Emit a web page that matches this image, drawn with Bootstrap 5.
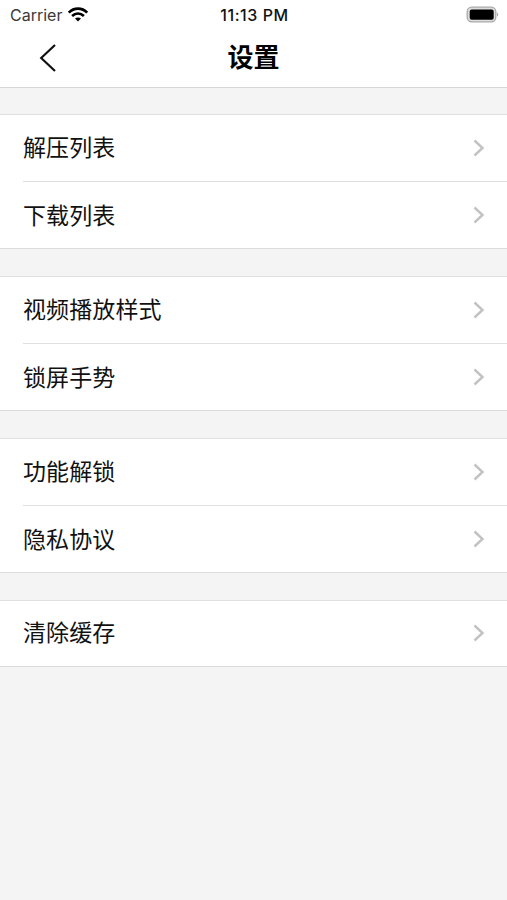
<!DOCTYPE html>
<html lang="zh-CN">
<head>
<meta charset="utf-8">
<meta name="viewport" content="width=device-width, initial-scale=1">
<title>设置</title>
<link href="https://cdn.jsdelivr.net/npm/bootstrap@5.3.0/dist/css/bootstrap.min.css" rel="stylesheet">
<style>
  body { background: #f4f4f4; color: #111; font-family: Inter, "Noto Sans CJK SC", sans-serif; }
  .top-area { height: 88px; border-bottom: 1px solid #d6d6d6; }
  .status { height: 30px; padding: 0 8px 0 10px; font-size: 16px; line-height: 30px; }
  .status > * { flex: 1 1 0; }
  .carrier { color: #3a3a3a; letter-spacing: 0; }
  .wifi { margin-left: 5px; }
  .clock { font-weight: 500; letter-spacing: .55px; }
  .title-bar { height: 55px; padding: 0 38px; }
  .title-bar h1 { font-size: 26px; font-weight: 700; line-height: 54px; color: #000; }
  .side { width: 20px; }
  .group-list { border-top: 1px solid #dfdfdf; border-bottom: 1px solid #dcdcdc; }
  .set-row { height: 66px; margin-left: 23px; padding-right: 22px; font-size: 23px; line-height: 66px; letter-spacing: .1px; color: #111; }
  .set-row + .set-row { border-top: 1px solid #dfdfdf; height: 67px; padding-top: 1px; }
  .set-row + .set-row svg { margin-bottom: 1px; }
  .group-list:last-child .set-row { height: 65px; line-height: 67px; }
  .group-list:last-child svg { margin-bottom: 1px; }
  .sections { padding-top: 26px; gap: 27px; }
</style>
</head>
<body>
<header class="top-area bg-white">
  <div class="status d-flex align-items-center">
    <div class="d-flex align-items-center">
      <span class="carrier">Carrier</span>
      <svg class="wifi" width="22" height="16" viewBox="0 0 22 16" fill="none" stroke="#000" stroke-width="2.700"><path d="M1.800 5.600C7 .4 15 .4 20.200 5.600"/><path d="M5.100 9c3.500-3.200 8.300-3.200 11.800 0"/><path d="M11 14.500l-3-2.900c1.700-1.500 4.300-1.500 6 0z" fill="#000" stroke="none"/></svg>
    </div>
    <span class="clock text-center">11:13 PM</span>
    <div class="d-flex justify-content-end">
      <svg width="34" height="18" viewBox="0 0 34 18"><rect x="2.200" y="1.200" width="28.600" height="14.600" rx="4.500" fill="#ddd" stroke="#a9a9a9" stroke-width="1.300"/><rect x="4.700" y="3.500" width="24" height="10.200" rx="2" fill="#000"/><path d="M32 6.500v4c1.600-.6 1.600-3.400 0-4z" fill="#aaa"/></svg>
    </div>
  </div>
  <nav class="title-bar d-flex justify-content-between align-items-center">
    <a href="#" class="side d-flex" aria-label="返回"><svg width="20" height="30" viewBox="0 0 20 30" fill="none" stroke="#111" stroke-width="2.200"><path d="M17 2 3.200 15 17 28"/></svg></a>
    <h1 class="m-0">设置</h1>
    <span class="side"></span>
  </nav>
</header>
<main class="sections d-flex flex-column">
  <section class="group-list bg-white">
    <div class="set-row d-flex justify-content-between align-items-center"><span>解压列表</span><svg width="12" height="18" viewBox="0 0 12 18" fill="none" stroke="#c2c2c2" stroke-width="2.400"><path d="M1.500 1.500 9.500 9l-8 7.500"/></svg></div>
    <div class="set-row d-flex justify-content-between align-items-center"><span>下载列表</span><svg width="12" height="18" viewBox="0 0 12 18" fill="none" stroke="#c2c2c2" stroke-width="2.400"><path d="M1.500 1.500 9.500 9l-8 7.500"/></svg></div>
  </section>
  <section class="group-list bg-white">
    <div class="set-row d-flex justify-content-between align-items-center"><span>视频播放样式</span><svg width="12" height="18" viewBox="0 0 12 18" fill="none" stroke="#c2c2c2" stroke-width="2.400"><path d="M1.500 1.500 9.500 9l-8 7.500"/></svg></div>
    <div class="set-row d-flex justify-content-between align-items-center"><span>锁屏手势</span><svg width="12" height="18" viewBox="0 0 12 18" fill="none" stroke="#c2c2c2" stroke-width="2.400"><path d="M1.500 1.500 9.500 9l-8 7.500"/></svg></div>
  </section>
  <section class="group-list bg-white">
    <div class="set-row d-flex justify-content-between align-items-center"><span>功能解锁</span><svg width="12" height="18" viewBox="0 0 12 18" fill="none" stroke="#c2c2c2" stroke-width="2.400"><path d="M1.500 1.500 9.500 9l-8 7.500"/></svg></div>
    <div class="set-row d-flex justify-content-between align-items-center"><span>隐私协议</span><svg width="12" height="18" viewBox="0 0 12 18" fill="none" stroke="#c2c2c2" stroke-width="2.400"><path d="M1.500 1.500 9.500 9l-8 7.500"/></svg></div>
  </section>
  <section class="group-list bg-white">
    <div class="set-row d-flex justify-content-between align-items-center"><span>清除缓存</span><svg width="12" height="18" viewBox="0 0 12 18" fill="none" stroke="#c2c2c2" stroke-width="2.400"><path d="M1.500 1.500 9.500 9l-8 7.500"/></svg></div>
  </section>
</main>
<script src="https://cdn.jsdelivr.net/npm/bootstrap@5.3.0/dist/js/bootstrap.bundle.min.js"></script>
</body>
</html>
